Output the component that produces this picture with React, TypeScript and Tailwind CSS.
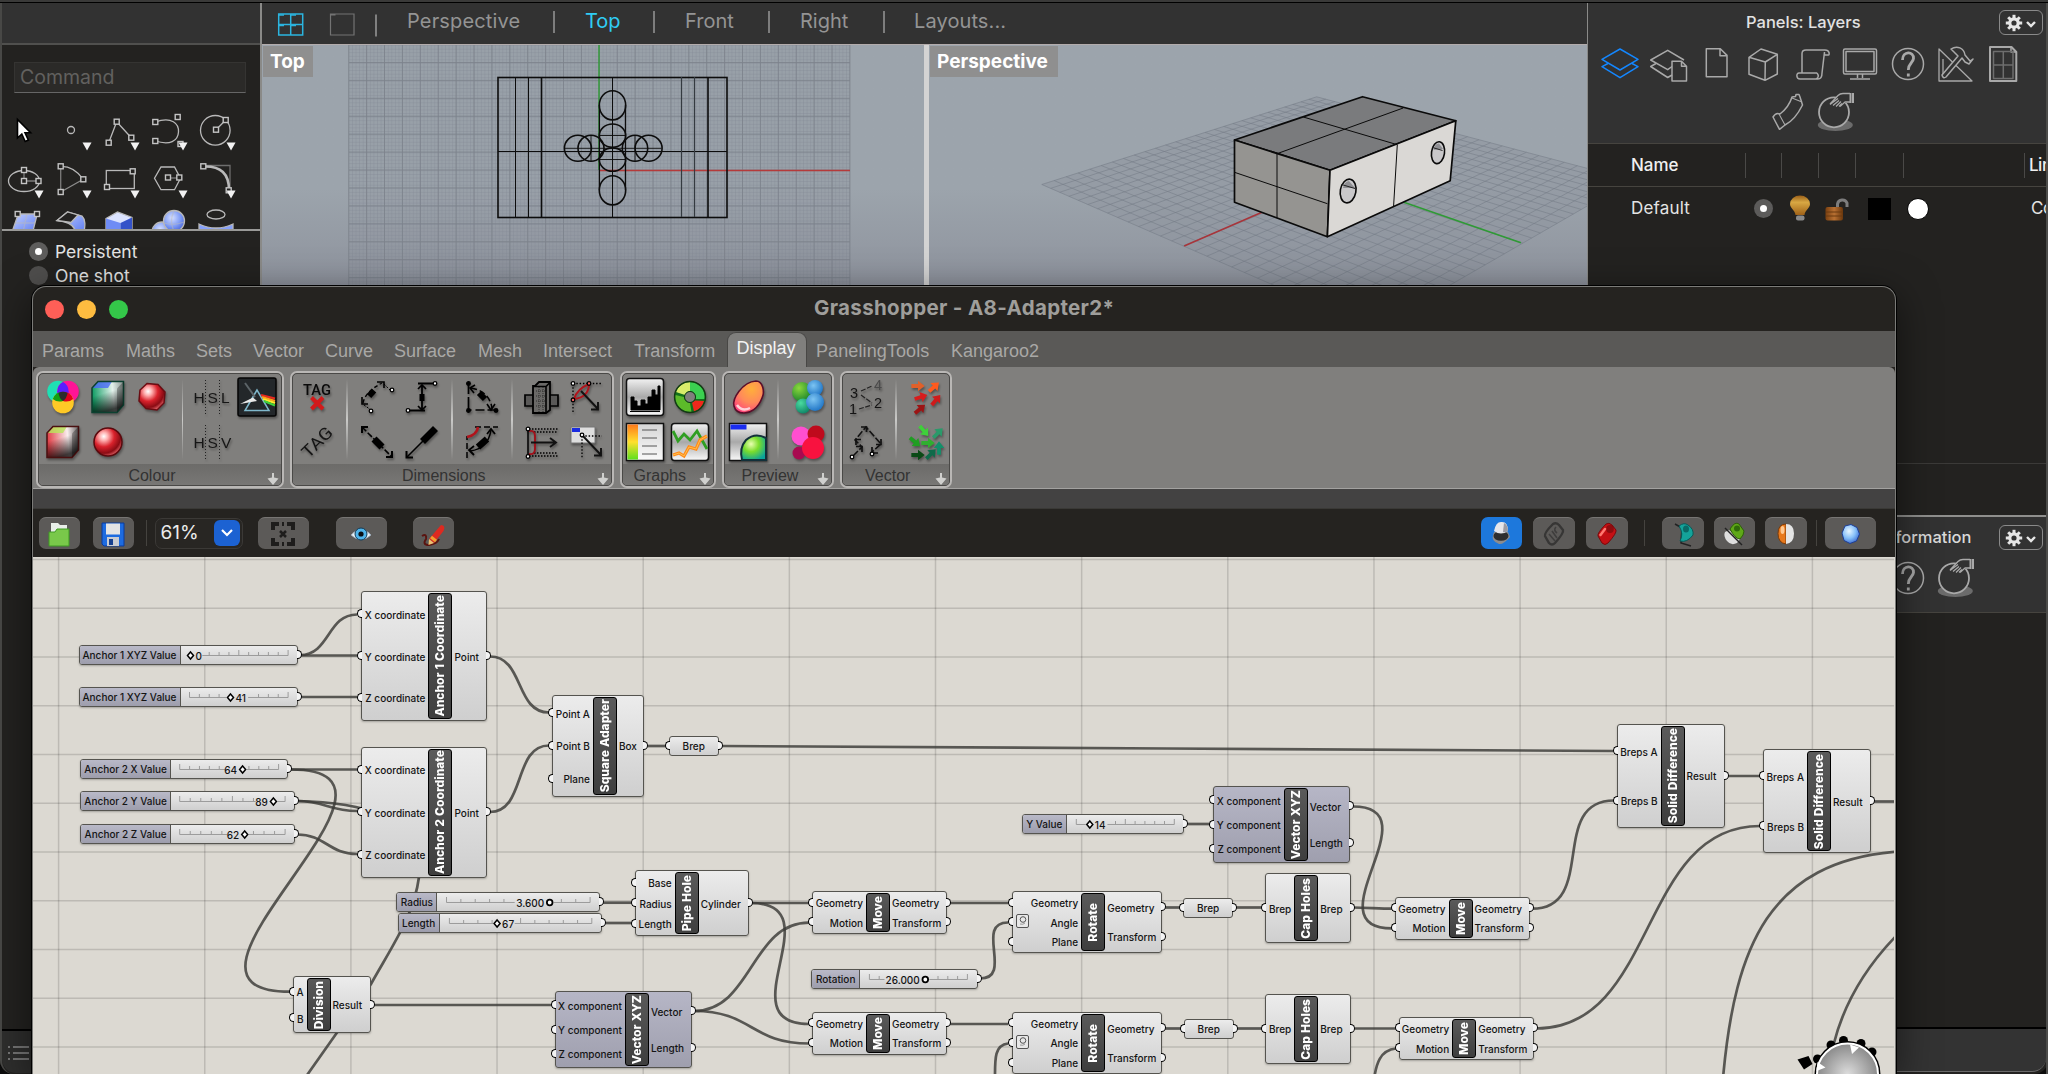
import React from "react";

type Pt = [number, number];

const line = "#a9a9a9";

/* ---------- shared gradients ---------- */
function Defs() {
  return (
    <svg className="absolute h-0 w-0" aria-hidden>
      <defs>
        <radialGradient id="redBall" cx="0.35" cy="0.3" r="0.75">
          <stop offset="0" stopColor="#ffffff" />
          <stop offset="0.2" stopColor="#ffb0b0" />
          <stop offset="0.5" stopColor="#d9222c" />
          <stop offset="0.8" stopColor="#8a0c14" />
          <stop offset="1" stopColor="#e8656a" />
        </radialGradient>
        <linearGradient id="greenCube" x1="0" y1="0.3" x2="1" y2="0.2">
          <stop offset="0" stopColor="#0f9c63" />
          <stop offset="0.65" stopColor="#e4f2ec" />
          <stop offset="1" stopColor="#8b9693" />
        </linearGradient>
        <linearGradient id="redCube" x1="0" y1="0.3" x2="1" y2="0.2">
          <stop offset="0" stopColor="#e03c44" />
          <stop offset="0.65" stopColor="#faeeee" />
          <stop offset="1" stopColor="#6d6a6a" />
        </linearGradient>
        <linearGradient id="cubeShade" x1="0" y1="0" x2="0.3" y2="1">
          <stop offset="0.45" stopColor="#000" stopOpacity="0" />
          <stop offset="1" stopColor="#000" stopOpacity="0.75" />
        </linearGradient>
        <linearGradient id="silver" x1="0" y1="0" x2="0" y2="1">
          <stop offset="0" stopColor="#f2f2f2" />
          <stop offset="0.5" stopColor="#a9a9a9" />
          <stop offset="1" stopColor="#fafafa" />
        </linearGradient>
        <linearGradient id="paper" x1="0" y1="0" x2="0" y2="1">
          <stop offset="0" stopColor="#d5d5d5" />
          <stop offset="1" stopColor="#fafafa" />
        </linearGradient>
        <linearGradient id="hueBar" x1="0" y1="0" x2="0" y2="1">
          <stop offset="0" stopColor="#ff7a1a" />
          <stop offset="0.5" stopColor="#ffe02e" />
          <stop offset="1" stopColor="#5ee01e" />
        </linearGradient>
        <radialGradient id="egg" cx="0.6" cy="0.25" r="0.85">
          <stop offset="0" stopColor="#ffb03a" />
          <stop offset="0.5" stopColor="#ff8a5a" />
          <stop offset="1" stopColor="#ff3a80" />
        </radialGradient>
        <radialGradient id="greenBall" cx="0.4" cy="0.35" r="0.7">
          <stop offset="0" stopColor="#e9ffb0" />
          <stop offset="0.45" stopColor="#7bdd2c" />
          <stop offset="1" stopColor="#0aa39a" />
        </radialGradient>
        <radialGradient id="blueBall" cx="0.4" cy="0.35" r="0.75">
          <stop offset="0" stopColor="#e8f6ff" />
          <stop offset="0.5" stopColor="#86c0fa" />
          <stop offset="1" stopColor="#2a58c8" />
        </radialGradient>
        <radialGradient id="skyBlob" cx="0.4" cy="0.35" r="0.7">
          <stop offset="0" stopColor="#7cc4f2" />
          <stop offset="1" stopColor="#1c72c4" />
        </radialGradient>
        <radialGradient id="leafBlob" cx="0.35" cy="0.3" r="0.8">
          <stop offset="0" stopColor="#8bd83c" />
          <stop offset="1" stopColor="#0d7a2a" />
        </radialGradient>
        <radialGradient id="tealBlob" cx="0.35" cy="0.3" r="0.8">
          <stop offset="0" stopColor="#4adba0" />
          <stop offset="1" stopColor="#0a7d62" />
        </radialGradient>
        <linearGradient id="solidBlue" x1="0" y1="0" x2="1" y2="1">
          <stop offset="0" stopColor="#c2d0ff" />
          <stop offset="1" stopColor="#5f7df0" />
        </linearGradient>
        <radialGradient id="solidSphere" cx="0.4" cy="0.35" r="0.7">
          <stop offset="0" stopColor="#d5dfff" />
          <stop offset="0.6" stopColor="#7d9af5" />
          <stop offset="1" stopColor="#4a66d8" />
        </radialGradient>
        <linearGradient id="bulb" x1="0" y1="0" x2="0" y2="1">
          <stop offset="0" stopColor="#9a5f18" />
          <stop offset="0.35" stopColor="#d8a843" />
          <stop offset="1" stopColor="#a06218" />
        </linearGradient>
        <linearGradient id="lock" x1="0" y1="0" x2="1" y2="0">
          <stop offset="0" stopColor="#7a4010" />
          <stop offset="0.5" stopColor="#b87032" />
          <stop offset="1" stopColor="#6a370c" />
        </linearGradient>
        <radialGradient id="dial" cx="0.5" cy="0.5" r="0.5">
          <stop offset="0" stopColor="#dcdcdc" />
          <stop offset="1" stopColor="#8a8a8a" />
        </radialGradient>
      </defs>
    </svg>
  );
}

/* ---------- left tool palette ---------- */
const Handle = ({ x, y }: { x: number; y: number }) => (
  <rect x={x - 2.5} y={y - 2.5} width="5" height="5" fill="#232220" stroke="#c4c4c4" strokeWidth="1.4" />
);

function Tool({ children, menu = true }: { children: React.ReactNode; menu?: boolean }) {
  return (
    <svg width="48" height="48" viewBox="0 0 48 48" fill="none" stroke="#b9b9b9" strokeWidth="1.3">
      {children}
      {menu && <path d="M34.5 36.5h9l-4.5 8z" fill="#f2f2f2" stroke="none" />}
    </svg>
  );
}

function ToolPalette() {
  return (
    <div className="grid grid-cols-[repeat(5,48px)] auto-rows-[48px] overflow-hidden h-[123px]">
      <Tool menu={false}>
        <path d="M17.5 13.5v18.5l4.3-4 3.4 7.5 3.2-1.4-3.4-7.3h5.6z" fill="#fff" stroke="#000" strokeWidth="1.6" />
      </Tool>
      <Tool>
        <circle cx="23" cy="24" r="3.5" />
      </Tool>
      <Tool>
        <path d="M12.7 36.7 20.7 15.7 35.3 31.7" />
        <Handle x={12.7} y={36.7} />
        <Handle x={20.7} y={15.7} />
        <Handle x={35.3} y={31.7} />
      </Tool>
      <Tool>
        <path d="M11.3 16C28 10 35 18 34.5 26 34 35 26 39.5 11.3 35" />
        <Handle x={11.3} y={16} />
        <Handle x={33.7} y={11} />
        <Handle x={11.3} y={35} />
        <Handle x={36.5} y={38} />
      </Tool>
      <Tool>
        <circle cx="23.3" cy="24.3" r="14.8" />
        <path d="M24 23.7 33.7 14" />
        <Handle x={24} y={23.7} />
        <Handle x={33.7} y={14} />
      </Tool>
      <Tool>
        <ellipse cx="24" cy="27" rx="15.5" ry="10.5" />
        <path d="M24 16v11h14" strokeOpacity="0.6" />
        <Handle x={24} y={16} />
        <Handle x={24} y={27} />
        <Handle x={38.5} y={27} />
      </Tool>
      <Tool>
        <path d="M12.7 38V12.3" strokeOpacity="0.6" />
        <path d="M12.7 12.3Q26 12 35.3 25.3" />
        <path d="M12.7 38 35.3 25.3" strokeOpacity="0.7" />
        <Handle x={12.7} y={12.3} />
        <Handle x={35.3} y={25.3} />
        <Handle x={12.7} y={38} />
      </Tool>
      <Tool>
        <rect x="10.3" y="16.5" width="28" height="18" />
        <Handle x={36.7} y={17.3} />
        <Handle x={11} y={33} />
      </Tool>
      <Tool>
        <path d="M17 13h13.5l6 11.3-6 11.4H17l-6.5-11.4z" />
        <path d="M24 24h11" strokeOpacity="0.6" />
        <Handle x={24} y={23.5} />
        <Handle x={35.3} y={23.5} />
      </Tool>
      <Tool>
        <path d="M12 11.5h26V36" strokeOpacity="0.5" />
        <path d="M12 12.5C29 12 37 20 37 36" strokeWidth="2.6" />
        <Handle x={11.3} y={12.3} />
        <Handle x={36.7} y={36.3} />
      </Tool>
      <Tool menu={false}>
        <path d="M18.3 12H37.3L32.7 30H12z" fill="url(#solidBlue)" />
        <path d="M16 21h19M27 12l-4 18" strokeOpacity="0.5" />
        <Handle x={17.7} y={12} />
        <Handle x={37} y={12} />
      </Tool>
      <Tool menu={false}>
        <path d="M19.5 10 34 14C38 18 37 24 36 30H27C27 24 22 20 9 18.5z" fill="url(#solidBlue)" />
        <path d="M19.5 10 30 13 23 20.5 9 18.5z" fill="#232220" />
      </Tool>
      <Tool menu={false}>
        <path d="M10 16.5 21.5 10 36 15.5V34H10z" fill="#dbe3ff" />
        <path d="M10 16.5 24.5 21V34H10z" fill="#6f8cf5" stroke="none" />
        <path d="M24.5 21 36 15.5V34H24.5z" fill="#3452c8" stroke="none" />
      </Tool>
      <Tool menu={false}>
        <circle cx="18" cy="30" r="10" fill="url(#solidSphere)" />
        <circle cx="30" cy="19" r="10.5" fill="url(#solidSphere)" />
        <path d="M20 21q10 3 20-1M30 9q-5 10 0 20" strokeOpacity="0.5" />
      </Tool>
      <Tool menu={false}>
        <ellipse cx="24" cy="12.5" rx="9" ry="4.5" />
        <path d="M7 22Q24 30 41 22V34H7z" fill="#86a0fa" />
      </Tool>
    </div>
  );
}

/* ---------- viewports ---------- */
function TopViewport() {
  return (
    <svg width="662" height="240" viewBox="262 45 662 240" className="block">
      <defs>
        <pattern id="minor" x="599" y="170.4" width="3.58" height="3.58" patternUnits="userSpaceOnUse">
          <path d="M0 0H3.58M0 0V3.58" stroke="#7f8791" strokeWidth="0.8" strokeOpacity="0.75" />
        </pattern>
      </defs>
      <rect x="349" y="45" width="501" height="240" fill="#8c939c" fillOpacity="0.2" />
      <rect x="349" y="45" width="501" height="240" fill="url(#minor)" />
      <g stroke="#7c838c" strokeWidth="1" strokeOpacity="0.85">
        {Array.from({ length: 29 }, (_, i) => {
          const x = 348.7 + i * 17.9;
          return <path key={i} d={`M${x} 45V285`} />;
        })}
        {Array.from({ length: 13 }, (_, i) => (
          <path key={i} d={`M349 ${62.5 + i * 17.92}H850`} />
        ))}
      </g>
      <path d="M599 45V170" stroke="#2f9a35" strokeWidth="1.4" />
      <path d="M599 170.5H850" stroke="#b53a3a" strokeWidth="1.4" />
      <g fill="none" stroke="#0c0c0c">
        <rect x="498" y="77.5" width="229" height="140" strokeWidth="1.6" />
        <path d="M515.5 77V217M528.5 77V217M612.5 77V217M498 151.5H727" />
        <path d="M681.5 77V217M694.5 77V217" stroke="#343a40" strokeWidth="1.2" />
        <path d="M541.5 77V217M708 77V217" strokeWidth="1.6" />
        <path d="M599.4 105V190M625.5 105V190" strokeWidth="1.3" />
        <g strokeWidth="1.6">
          <ellipse cx="612.5" cy="105.3" rx="13.2" ry="14.6" />
          <ellipse cx="612.5" cy="135.6" rx="13.2" ry="11.6" />
          <ellipse cx="612.5" cy="159.6" rx="13.2" ry="11.7" />
          <ellipse cx="612.5" cy="190.3" rx="13.2" ry="14.6" />
          <ellipse cx="577.9" cy="148.3" rx="13.5" ry="13" />
          <ellipse cx="591" cy="148.3" rx="13" ry="13" />
          <ellipse cx="635" cy="148.3" rx="12.7" ry="13" />
          <ellipse cx="648.6" cy="148.3" rx="13.5" ry="13" />
        </g>
        <path d="M564.5 148.3H661.5M600 135.5H625M600 159.5H625M591 135V161M635 135V161" strokeWidth="0.9" />
      </g>
    </svg>
  );
}

/* maps the unit square onto a four-sided ground plane */
function projector(p0: Pt, p1: Pt, p2: Pt, p3: Pt) {
  const dx1 = p1[0] - p2[0], dx2 = p3[0] - p2[0], dx3 = p0[0] - p1[0] + p2[0] - p3[0];
  const dy1 = p1[1] - p2[1], dy2 = p3[1] - p2[1], dy3 = p0[1] - p1[1] + p2[1] - p3[1];
  const det = dx1 * dy2 - dx2 * dy1;
  const g = (dx3 * dy2 - dx2 * dy3) / det;
  const h = (dx1 * dy3 - dx3 * dy1) / det;
  const a = p1[0] - p0[0] + g * p1[0], b = p3[0] - p0[0] + h * p3[0];
  const d = p1[1] - p0[1] + g * p1[1], e = p3[1] - p0[1] + h * p3[1];
  return (u: number, v: number): Pt => {
    const w = g * u + h * v + 1;
    return [(a * u + b * v + p0[0]) / w, (d * u + e * v + p0[1]) / w];
  };
}

function PerspectiveViewport() {
  const P = projector([1041.8, 184.5], [1316.7, 96.8], [1632, 180.2], [1374.2, 328.8]);
  const seg = (a: Pt, b: Pt) => `M${a[0]} ${a[1]}L${b[0]} ${b[1]}`;
  const n = 28;
  const grid: string[] = [];
  for (let i = 0; i <= n; i++) {
    grid.push(seg(P(i / n, 0), P(i / n, 1)));
    grid.push(seg(P(0, i / n), P(1, i / n)));
  }
  return (
    <svg width="658" height="240" viewBox="929 45 658 240" className="block">
      <path d="M1041.8 184.5 1316.7 96.8 1632 180.2 1374.2 328.8z" fill="#8d949d" fillOpacity="0.5" />
      <path d={grid.join("")} stroke="#757c86" strokeWidth="0.8" strokeOpacity="0.7" />
      <path d="M1184.2 246 1290 200" stroke="#a8343a" strokeWidth="1.5" />
      <path d="M1520.9 242.7 1380 194" stroke="#2f9a35" strokeWidth="1.5" />
      <g stroke="#0a0a0a" strokeWidth="1.7" strokeLinejoin="round">
        <path d="M1362.5 96.7 1455.8 120.7 1330 170.3 1234.5 140z" fill="#7a7b7d" />
        <path d="M1234.5 140 1330 170.3 1327.4 236.7 1234.5 202.3z" fill="#959491" />
        <path d="M1330 170.3 1455.8 120.7 1450.2 180.7 1327.4 236.7z" fill="#dad8d5" />
      </g>
      <path
        d="M1303.3 117 1397.3 144.7 1393.6 206M1403.2 108 1277 153.7V217.7M1234.5 172.3 1327.4 203.7"
        fill="none"
        stroke="#0a0a0a"
      />
      <g fill="#c9c8ca" stroke="#0a0a0a" strokeWidth="1.6">
        <ellipse cx="1348.1" cy="191" rx="7.8" ry="12" transform="rotate(10 1348 191)" />
        <ellipse cx="1438" cy="152.7" rx="6.5" ry="11" transform="rotate(8 1438 152.7)" />
      </g>
      <path d="M1343 188Q1344 182 1349 181L1355 188zM1433.5 150Q1435 143 1439 143.5L1443 149z" fill="#8f8f93" />
      <path d="M1341.5 184.5l13.5 4M1432.5 147.5l10 3" stroke="#222" />
    </svg>
  );
}

const Tag = ({ children, className }: { children: React.ReactNode; className: string }) => (
  <div className={`absolute top-[1px] flex h-[31px] items-center bg-[#8f8f8f] pl-[7px] pt-[2px] text-[19px] font-bold text-white ${className}`}>
    {children}
  </div>
);

function ViewTabs() {
  const bar = <span className="relative top-[1px] h-[22px] w-[2px] shrink-0 bg-[#7d7d7d]" />;
  return (
    <div className="flex h-[41px] items-center bg-[#323232] pb-[6px] text-[20px] text-[#949494]">
      <svg width="116" height="30" viewBox="261 6 116 30" className="relative top-[1px] shrink-0" fill="none">
        <path d="M277.7 13h24v21h-24zM289.7 13v21M277.7 23.5h24" stroke="#2bb5e0" strokeWidth="1.5" />
        <path d="M278 14h5M290 14h5M278 24.5h5M290 24.5h5" stroke="#2bb5e0" strokeWidth="1.5" />
        <path d="M329.5 13h23.5v21h-23.5zM329.5 14h5" stroke="#737373" strokeWidth="1.2" />
        <path d="M375 13.5v22" stroke="#8a8a8a" strokeWidth="1.8" />
      </svg>
      <div className="ml-[29px] w-[146px] shrink-0 tracking-[0.15px]">Perspective</div>
      {bar}
      <div className="ml-[30px] w-[68px] shrink-0 text-[#2fcdf5]">Top</div>
      {bar}
      <div className="ml-[30px] w-[83px] shrink-0">Front</div>
      {bar}
      <div className="ml-[30px] w-[83px] shrink-0">Right</div>
      {bar}
      <div className="ml-[29px] tracking-[0.1px]">Layouts...</div>
    </div>
  );
}

/* ---------- right panel ---------- */
const PanelIcon = ({ children, stroke = line }: { children: React.ReactNode; stroke?: string }) => (
  <svg width="48" height="48" viewBox="0 0 48 48" fill="none" stroke={stroke} strokeWidth="1.5" strokeLinejoin="round">
    {children}
  </svg>
);

const HandBall = () => (
  <PanelIcon>
    <ellipse cx="23.3" cy="37" rx="17.5" ry="6" fill="#6b6b6b" stroke="none" />
    <circle cx="22" cy="24.3" r="15" fill="#323232" strokeWidth="1.8" />
    <path d="M18 16 26 7.5Q28 5.5 31 5.5H38V14L33 15 28 19 19 17z" fill="#323232" stroke="none" />
    <path d="M18 16 26 7.5Q28 5.5 31 5.5H38M38 14 33 14 28 18.5M18 16.5 26 10.5M21 17.5 27 12.5M24 18.5 29 13.5M27 18.5 30 15.5" strokeWidth="1.3" />
    <path d="M38.5 5v10M41 5v10" strokeWidth="2" />
  </PanelIcon>
);

const HelpIcon = () => (
  <PanelIcon>
    <circle cx="24" cy="24" r="15.5" />
    <path d="M18.5 20C18.5 10.5 30 11 29.5 18.5 29 23 24.5 23 24.3 30" strokeWidth="2.8" />
    <path d="M24.3 33.5v3" strokeWidth="2.8" />
  </PanelIcon>
);

function GearButton() {
  return (
    <div className="flex h-[25px] w-[44px] shrink-0 items-center justify-center rounded-[6px] border border-[#8a8a8a]">
      <svg width="36" height="20" viewBox="0 0 36 20" fill="none">
        <circle cx="11" cy="10" r="4.2" stroke="#e6e6e6" strokeWidth="3.2" />
        {Array.from({ length: 8 }, (_, i) => (
          <rect key={i} x="9.5" y="1.8" width="3" height="4" fill="#e6e6e6" transform={`rotate(${i * 45} 11 10)`} />
        ))}
        <path d="M24 9l4 4 4-4" stroke="#e6e6e6" strokeWidth="2.4" />
      </svg>
    </div>
  );
}

function LayersPanel() {
  const sep = "absolute top-[9px] h-[25px] w-px bg-[#4a4947]";
  return (
    <div className="flex w-[458px] flex-col overflow-hidden">
      <div className="h-[141px] shrink-0 border-b border-[#46443f] bg-[#323232]">
        <div className="flex h-[37px] items-start pt-[7px]">
          <div className="ml-[158px] w-[253px] text-[16.5px] font-medium leading-[25px] text-[#e2e2e2]">
            Panels: Layers
          </div>
          <GearButton />
        </div>
        <div className="ml-[8px] flex">
          <PanelIcon stroke="#1487ff">
            <path d="M24 9 42 19.3 24 30 6 19.3z" />
            <path d="M12 23.5 6 26.7 24 37.7 42 26.7 36 23.5" />
          </PanelIcon>
          <PanelIcon>
            <path d="M28 26.5 23.7 29.7 6.7 20 23.7 10.3 40 20" />
            <path d="M12 23.5 6.7 26.5 23.7 37.5 28 35" />
            <path d="M28 21.3h9.5l5 5V41H28zM37.5 21.3v5h5" />
          </PanelIcon>
          <PanelIcon>
            <path d="M14.3 8.7h14l6.7 6.7v21.3H14.3zM28 8.7v7h7" />
          </PanelIcon>
          <PanelIcon>
            <path d="M21 9 37.3 14.3V34L25 40.3 9 34.3V17.3zM9 17.3 25.3 22 37.3 14.3M25.3 22 25 40" />
          </PanelIcon>
          <PanelIcon>
            <path d="M18 10H37C42 10 41.5 15 40.5 15H36.5V13.5M14 33V13.5Q14 10 18 10M36.5 12L34 33Q34 39 30 39H12C8 39 8 33 11 33H29M28 39Q32 37 29 33" />
          </PanelIcon>
          <PanelIcon>
            <rect x="7.5" y="9" width="33" height="25" rx="1.5" />
            <rect x="10" y="11.5" width="28" height="20" />
            <path d="M21.5 34v4M26.5 34v4M14 39h20" />
          </PanelIcon>
          <HelpIcon />
          <PanelIcon>
            <path d="M7 9V41H40zM11 19V37" strokeWidth="1.3" />
            <path d="M10 35 26 16C22 12 20 10 19 9 25 5 32 8 33 15L38 21 41 19 37 24 33 22 30 18 14 37Q11 39 10 35z" fill="#323232" />
          </PanelIcon>
          <PanelIcon>
            <path d="M10 7H31.5L36.3 12V41H10z" strokeWidth="2" />
            <path d="M31 7v5h5" />
            <path d="M13.5 11.5h19.5v27h-19.5zM23.3 11.5v27M13.5 25h19.5" stroke="#6e6e6e" />
          </PanelIcon>
        </div>
        <div className="ml-[176px] flex">
          <PanelIcon>
            <path d="M9 29Q12 24 16 26 25 19 28 9L31.5 8.5 32 6.5H35L36 9 38.5 17Q31 32 21 37L15.5 41.3z" />
            <path d="M28 10 38 14M15 26 21 37" strokeWidth="1.1" />
          </PanelIcon>
          <HandBall />
        </div>
      </div>
      <div className="relative h-[43px] shrink-0 border-b border-[#46443f] pl-[43px] text-[17px] font-medium leading-[43px] text-[#f0f0f0]">
        Name
        <span className={`${sep} left-[157px]`} />
        <span className={`${sep} left-[193px]`} />
        <span className={`${sep} left-[230px]`} />
        <span className={`${sep} left-[267px]`} />
        <span className={`${sep} left-[315px]`} />
        <span className={`${sep} left-[436px]`} />
        <span className="absolute left-[441px] top-0 tracking-[-0.5px]">Lin</span>
      </div>
      <div className="-mt-px flex h-[45px] shrink-0 items-center text-[17px] text-[#e4e4e4]">
        <div className="w-[166px] shrink-0 pl-[43px] tracking-[0.2px]">Default</div>
        <div className="flex h-[19px] w-[19px] shrink-0 items-center justify-center rounded-full bg-[#5c5b5a]">
          <span className="h-[7px] w-[7px] rounded-full bg-white" />
        </div>
        <svg width="100" height="30" viewBox="1773 194 100 30" className="-mr-[8px] shrink-0">
          <path d="M1790 204a10 8.5 0 0 1 20 0C1810 208 1805 210 1804.5 215h-9C1795 210 1790 208 1790 204z" fill="url(#bulb)" />
          <rect x="1796" y="215.5" width="8.5" height="5" rx="2" fill="#8a8a8a" />
          <path d="M1837.5 208v-4a5 5 0 0 1 9.5-1v4" fill="none" stroke="#7d7d7d" strokeWidth="3" />
          <rect x="1825.5" y="207" width="17.5" height="13.5" rx="2" fill="url(#lock)" />
          <path d="M1826 212h16M1826 216h16" stroke="#6b3a10" />
        </svg>
        <div className="ml-[3px] h-[22px] w-[23px] shrink-0 bg-black" />
        <div className="ml-[16px] h-[22px] w-[22px] shrink-0 rounded-full border border-black bg-white" />
        <div className="ml-[102px] w-[15px] shrink-0 whitespace-nowrap tracking-[-0.5px]">Co</div>
      </div>
      <div className="mt-[232px] h-px shrink-0 bg-[#3b3a38]" />
      <div className="mt-[51px] h-[98px] shrink-0 border-b border-t-[2px] border-b-[#46443f] border-t-[#8f8f8d] bg-[#323232]">
        <div className="flex items-start pt-[8px]">
          <div className="w-[411px] pl-[293px] text-[16.5px] font-medium leading-[25px] text-[#dadada]">
            Information
          </div>
          <GearButton />
        </div>
        <div className="ml-[296px] mt-[4px] flex">
          <HelpIcon />
          <HandBall />
        </div>
      </div>
      <div className="h-[414px] shrink-0" />
      <div className="h-[45px] shrink-0 rounded-br-[14px] border-b border-t-2 border-b-[#6a6a6a] border-t-black bg-[#333]" />
    </div>
  );
}

/* ---------- Grasshopper ribbon ---------- */
const Ico = ({ children }: { children: React.ReactNode }) => (
  <div className="flex h-[44.7px] w-[44.7px] items-center justify-center">
    <svg width="40" height="40" viewBox="0 0 40 40" fill="none" className="drop-shadow-[1px_2px_1px_rgba(0,0,0,0.35)]">
      {children}
    </svg>
  </div>
);

const Sep = () => <div className="mx-[7px] my-[4px] w-[1.5px] bg-linear-to-b from-transparent via-[#c9c9c7] to-transparent" />;

const Col = ({ children }: { children: React.ReactNode }) => <div className="flex flex-col">{children}</div>;

function Group({ name, children, pad = "px-[0.5px]" }: { name: string; children: React.ReactNode; pad?: string }) {
  return (
    <div className="h-[117px] rounded-[7px] border-2 border-[#b9b7b5] bg-[#7f7e7c]">
      <div className="flex h-full flex-col overflow-hidden rounded-[5px] border border-[#4a4947] bg-[#807f7d]">
        <div className={`flex h-[91px] pt-[0.5px] ${pad}`}>{children}</div>
        <div className="relative flex flex-1 items-center justify-center bg-linear-to-b from-[#6c6b69] to-[#7a7977] pr-[16px] text-[16px] text-[#333]">
          {name}
          <svg width="12" height="12" viewBox="0 0 12 12" className="absolute bottom-[3px] right-[2px]">
            <path d="M5 0h2v4.5l4.5 1L6 12 .5 5.5l4.500-1z" fill="#d0d0ce" />
          </svg>
        </div>
      </div>
    </div>
  );
}

const Cube = ({ fill, top, edge }: { fill: string; top: string; edge: string }) => (
  <g>
    <path d="M4 11 10 4.5H35.5V28L29 35.5H4z" fill={`url(#${fill})`} />
    <path d="M4 11 10 4.5H24L20 11z" fill={top} fillOpacity="0.8" />
    <path d="M4 11 10 4.5H35.5V28L29 35.5H4z" fill="url(#cubeShade)" stroke={edge} strokeWidth="1.5" />
    <path d="M29 35.5V11.5L35.5 4.5V28z" fill="#000" fillOpacity="0.28" />
  </g>
);

const HText = ({ last }: { last: string }) => (
  <g>
    <path d="M13.5 3v34M27.5 3v34" stroke="#222" strokeDasharray="1 2" />
    <g fill="#161616" fontFamily="Liberation Sans, sans-serif" fontSize="15.5">
      <text x="1.5" y="26">H</text>
      <text x="15.5" y="26">S</text>
      <text x="29" y="26">{last}</text>
    </g>
  </g>
);

const Dot = ({ x, y, f = "#fff" }: { x: number; y: number; f?: string }) => (
  <circle cx={x} cy={y} r="1.8" fill={f} stroke="#000" strokeWidth="1.3" />
);

const SmallArrow = ({ x, y, r, c }: { x: number; y: number; r: number; c: string }) => (
  <path d="M-7-2H0V-5.5L7 0 0 5.5V2H-7z" fill={c} transform={`translate(${x} ${y}) rotate(${r}) scale(0.95)`} />
);

function Ribbon() {
  return (
    <div className="flex h-[122px] items-start gap-[6px] rounded-t-[6px] border-b border-[#a3a2a0] bg-[#807f7d] pl-[3px] pt-[4px]">
      <Group name="Colour" pad="px-[1.5px]">
        <Col>
          <Ico>
            <circle cx="15" cy="14.5" r="10.8" fill="#1fe0b4" />
            <circle cx="25" cy="14.5" r="10.8" fill="#ff1496" />
            <circle cx="20" cy="25.5" r="10.8" fill="#ffc926" />
            <path d="M20 5a10.8 10.8 0 0 1 0 19 10.8 10.8 0 0 1 0-19z" fill="#5a1eff" />
            <path d="M9.8 22a10.8 10.8 0 0 1 10.2-7.3v9.3a10.8 10.8 0 0 1-10.2-2z" fill="#12a012" />
            <path d="M30.2 22a10.8 10.8 0 0 0-10.2-7.3v9.3a10.8 10.8 0 0 0 10.2-2z" fill="#e0001c" />
            <path d="M15.5 16q4.5-2.5 9 0-.5 5-4.5 8-4-3-4.5-8z" fill="#2c2c2c" />
          </Ico>
          <Ico>
            <Cube fill="redCube" top="#b8e85a" edge="#4a1010" />
          </Ico>
        </Col>
        <Col>
          <Ico>
            <Cube fill="greenCube" top="#4a6af8" edge="#0c4030" />
          </Ico>
          <Ico>
            <circle cx="20" cy="20" r="14" fill="url(#redBall)" stroke="#5a0a0e" strokeWidth="1.5" />
          </Ico>
        </Col>
        <Ico>
          <path d="M15 6.5 26 7.5 33 15 32 26 25 33 14 31.5 7 24 8 13z" fill="url(#redBall)" stroke="#6a0c12" strokeWidth="1.5" />
        </Ico>
        <Sep />
        <Col>
          <Ico><HText last="L" /></Ico>
          <Ico><HText last="V" /></Ico>
        </Col>
        <Ico>
          <rect x="1" y="1" width="38" height="38" rx="2" fill="#23272a" stroke="#050505" strokeWidth="1.5" />
          <path d="M20 13 8 33.5H32z" stroke="#7fb8cc" strokeWidth="1.5" />
          <path d="M3 27 16 20.5 20 24z" fill="#e8e8e8" />
          <path d="M8 6l10 14" stroke="#5c6468" strokeWidth="2" />
          <path d="M24 18 38 21.5" stroke="#e8281e" strokeWidth="2.2" />
          <path d="M25 20 38 24" stroke="#ff9d1a" strokeWidth="2" />
          <path d="M26 22 38 26" stroke="#ffe92a" strokeWidth="2" />
          <path d="M27 24 38 28.5" stroke="#3fd13a" strokeWidth="2" />
        </Ico>
      </Group>

      <Group name="Dimensions" pad="px-[1.5px]">
        <Col>
          <Ico>
            <text x="6" y="18" fontSize="15" fill="#0a0a0a" fontFamily="Roboto, sans-serif" fontWeight="500" textLength="28" lengthAdjust="spacingAndGlyphs">TAG</text>
            <path d="M14.5 20.5 26 32M26 20.5 14.5 32" stroke="#d31a1a" strokeWidth="4" />
          </Ico>
          <Ico>
            <text x="2" y="26" fontSize="17" fill="#141414" fontFamily="Roboto, sans-serif" textLength="36" lengthAdjust="spacingAndGlyphs" transform="rotate(-45 20 20)">TAG</text>
          </Ico>
        </Col>
        <Sep />
        <Col>
          <Ico>
            <path d="M6 26Q8 15 25 6" stroke="#000" strokeWidth="1.4" strokeDasharray="4 2.5" />
            <path d="M12 19 17 13.5" stroke="#000" strokeWidth="6" />
            <path d="M5 20v7h6M20 5h7v6" stroke="#000" strokeWidth="1.6" />
            <path d="M7 28l7 5M27 7l6 6" stroke="#000" strokeDasharray="2 1.5" />
            <Dot x={14} y={34} /><Dot x={35} y={13} />
          </Ico>
          <Ico>
            <path d="M5 5 35 35" stroke="#000" strokeWidth="1.5" strokeDasharray="6 2" />
            <path d="M17 17 25 25" stroke="#000" strokeWidth="7" />
            <path d="M5 11V5h6M29 35h6v-6" stroke="#000" strokeWidth="2" />
          </Ico>
        </Col>
        <Col>
          <Ico>
            <path d="M16 6.5H33M6 33.5H23M20 9v8M20 24v8" stroke="#000" strokeWidth="1.8" />
            <path d="M20 17v7" stroke="#000" strokeWidth="5" />
            <path d="M16 12l4-4 4 4M16 29l4 4 4-4" stroke="#000" strokeWidth="1.7" />
            <Dot x={33} y={6.5} /><Dot x={6} y={33.5} />
          </Ico>
          <Ico>
            <path d="M5 35 26 14" stroke="#000" strokeWidth="1.6" />
            <path d="M20.5 19.5 33.5 6.5" stroke="#000" strokeWidth="7" />
            <path d="M4.5 29v6.5h6.5" stroke="#000" strokeWidth="2" />
          </Ico>
        </Col>
        <Sep />
        <Col>
          <Ico>
            <path d="M6.5 8v25H32" stroke="#000" strokeWidth="1.7" strokeDasharray="9 3 16 4" />
            <path d="M9 11Q27 14 30 31" stroke="#000" strokeWidth="1.5" strokeDasharray="6 3" />
            <path d="M17 16 23 22" stroke="#000" strokeWidth="6" />
            <path d="M13 8 8 11l4 5M25 27l4 6 4-6" stroke="#000" strokeWidth="1.6" />
            <Dot x={6.5} y={6.5} f="#000" /><Dot x={6.5} y={33.5} f="#000" /><Dot x={34} y={33.5} f="#000" />
          </Ico>
          <Ico>
            <path d="M5 36V14M13 5H36" stroke="#000" strokeWidth="1.5" strokeDasharray="6 3" />
            <path d="M16 5Q15 13 5 15" stroke="#b0141c" strokeWidth="2.6" />
            <path d="M8 29Q26 27 29 8" stroke="#000" strokeWidth="1.5" />
            <path d="M16 25 25 17" stroke="#000" strokeWidth="6.5" />
            <path d="M25 12l4-5 4 5M12 24l-5 4 5 5" stroke="#000" strokeWidth="1.8" />
          </Ico>
        </Col>
        <Sep />
        <Col>
          <Ico>
            <path d="M3 18H36V29H3z" fill="#5a5958" stroke="#000" strokeWidth="1.7" />
            <path d="M13 9 17 5H28V33L24 36H11V9z" fill="#6a6967" stroke="#000" strokeWidth="1.8" />
            <path d="M11 9.5H24V36M24 9.5 28 5.5" stroke="#000" strokeWidth="1.6" />
            <path d="M14 14h9M14 19h9M14 24h9M14 29h9M17 10v25M21 10v25" stroke="#222" strokeWidth="0.8" strokeDasharray="1 1" />
          </Ico>
          <Ico>
            <path d="M6 7V34" stroke="#000" strokeWidth="1.5" />
            <path d="M7 7H36M12 10H36M7 34H36M12 31H36" stroke="#000" strokeDasharray="1.5 1.5" strokeWidth="1.3" />
            <path d="M7 9Q13 8 13 14V27Q13 33 7 32" stroke="#a0101a" strokeWidth="1.9" />
            <path d="M9 20.5H33M28 16l6 4.5-6 4.5" stroke="#111" strokeWidth="1.9" />
            <Dot x={6} y={7} /><Dot x={6} y={34.5} />
          </Ico>
        </Col>
        <Col>
          <Ico>
            <path d="M6 6.5H35M6 7V36" stroke="#000" strokeDasharray="1.5 1.8" strokeWidth="1.3" />
            <path d="M22 7Q22 20 7 22Q10 12 22 7z" stroke="#b0141c" strokeWidth="1.9" />
            <path d="M14 14 31 32M31 25v7.5h-7" stroke="#111" strokeWidth="1.9" />
            <Dot x={6} y={6.5} /><Dot x={22} y={6.5} f="#f66" /><Dot x={6} y={23} f="#f66" />
          </Ico>
          <Ico>
            <path d="M4 5H28V21H4z" fill="#dedede" stroke="#777" />
            <path d="M5 6h8v4H5z" fill="#1a2ce0" />
            <path d="M15 14H35M15 14V36" stroke="#000" strokeDasharray="1.5 1.8" strokeWidth="1.3" />
            <path d="M15 13 34 33M34 26v7.5h-7" stroke="#111" strokeWidth="1.9" />
            <Dot x={15} y={13} />
          </Ico>
        </Col>
      </Group>

      <Group name="Graphs">
        <Col>
          <Ico>
            <rect x="1.5" y="1.5" width="37" height="37" rx="3" fill="url(#silver)" stroke="#111" strokeWidth="1.5" />
            <path d="M6 33V20h3v4h3v5h4v-6h4v4h3v-7h4V13h3v5h3V9h2V33zM5 34.5h30" fill="#000" stroke="#000" />
          </Ico>
          <Ico>
            <rect x="1.5" y="1.5" width="37" height="37" fill="url(#paper)" stroke="#111" strokeWidth="1.5" />
            <rect x="2.5" y="2.5" width="10.5" height="35" fill="url(#hueBar)" />
            <path d="M17 8h15M17 16h15M17 24h15M17 32h15" stroke="#555" />
          </Ico>
        </Col>
        <Col>
          <Ico>
            <circle cx="20" cy="20" r="15.5" fill="#12701c" />
            <path d="M20 5a15 15 0 0 0-14 10l9 3a6 6 0 0 1 5-4z" fill="#d8ec6a" />
            <path d="M20 5a15 15 0 0 1 14.5 17h-9a6 6 0 0 0-5.5-8z" fill="#3bd050" />
            <path d="M34 24a15 15 0 0 1-10 10.5l-2-9a6 6 0 0 0 3-2z" fill="#f0281c" />
            <path d="M5.5 18a15 15 0 0 0 16 17l-1.5-9a6 6 0 0 1-6-6z" fill="#5cba2a" />
            <circle cx="20" cy="20" r="5.5" fill="#807f7d" stroke="#0c3a10" />
            <circle cx="20" cy="20" r="15.5" stroke="#143a14" strokeWidth="1.3" />
          </Ico>
          <Ico>
            <rect x="1.5" y="1.5" width="37" height="37" rx="3" fill="url(#silver)" stroke="#111" strokeWidth="1.5" />
            <path d="M3 9 8 19 14 12 20 18 27 9 37 27" stroke="#2f9e22" strokeWidth="2.8" />
            <path d="M3 33 9 31 14 34 19 25 26 27 30 18 37 14" stroke="#ff8a1a" strokeWidth="3.2" />
            <path d="M3 33 9 31 14 34 19 25 26 27 30 18 37 14" stroke="#ffc04a" />
          </Ico>
        </Col>
      </Group>

      <Group name="Preview">
        <Col>
          <Ico>
            <path d="M6 29C4 22 14 5 28 4 35 4 37 15 34 21 30 32 22 36 16 36 10 36 7 33 6 29z" fill="url(#egg)" stroke="#5a0f2a" strokeWidth="1.6" />
            <path d="M9 28Q14 35 22 31" stroke="#ffd0d8" strokeWidth="2.5" />
          </Ico>
          <Ico>
            <rect x="1.5" y="1.5" width="37" height="37" fill="url(#silver)" stroke="#111" strokeWidth="1.5" />
            <rect x="2.5" y="2.5" width="16" height="5" fill="#1a2cf0" />
            <path d="M14 38Q11 26 18 18 27 10 38 16V38z" fill="url(#greenBall)" stroke="#12303a" strokeWidth="2" />
          </Ico>
        </Col>
        <Sep />
        <Col>
          <Ico>
            <circle cx="14" cy="15" r="10" fill="url(#leafBlob)" />
            <circle cx="27" cy="11" r="8" fill="url(#skyBlob)" />
            <circle cx="15" cy="29" r="7.5" fill="url(#tealBlob)" />
            <circle cx="27" cy="25" r="9" fill="url(#skyBlob)" />
          </Ico>
          <Ico>
            <circle cx="13" cy="14" r="9.5" fill="#ff4fd0" />
            <circle cx="28" cy="12" r="8.5" fill="#bf0a1c" />
            <circle cx="11" cy="31" r="6.5" fill="#a80a50" />
            <circle cx="25" cy="26" r="11" fill="#f8123f" />
          </Ico>
        </Col>
      </Group>

      <Group name="Vector">
        <Col>
          <Ico>
            <g fontFamily="Liberation Sans, sans-serif" fontSize="14.5" fill="#141414">
              <text x="4" y="21">3</text>
              <text x="28" y="13" fill="#4a4a4a">4</text>
              <text x="3" y="37">1</text>
              <text x="28" y="31">2</text>
            </g>
            <path d="M15 14 26 9M15 18 26 26M13 32 26 28" stroke="#222" strokeWidth="1.2" strokeDasharray="5 1.5" />
          </Ico>
          <Ico>
            <path d="M7 34 16 25 9 18 20 5 35 22 26 30" stroke="#111" strokeWidth="1.6" strokeDasharray="7 2" />
            <path d="M16 30v-5.5h-6M10 23v-5.5h5M15 5h5.5v5M35 17v5.5h-5M26 25v6h6" stroke="#111" strokeWidth="1.7" />
            <Dot x={6} y={35} /><Dot x={26} y={32} />
          </Ico>
        </Col>
        <Sep />
        <Col>
          <Ico>
            <SmallArrow x={12} y={9} r={0} c="#e0602a" />
            <SmallArrow x={28} y={10} r={-42} c="#ff5a1e" />
            <SmallArrow x={15} y={20} r={-18} c="#d81c1c" />
            <SmallArrow x={30} y={23} r={-50} c="#d01a1a" />
            <SmallArrow x={14} y={32} r={-40} c="#9c1414" />
          </Ico>
          <Ico>
            <SmallArrow x={18} y={9} r={50} c="#3fd03a" />
            <SmallArrow x={32} y={11} r={-45} c="#2a9a6a" />
            <SmallArrow x={9} y={20} r={40} c="#1f9e22" />
            <SmallArrow x={22} y={21} r={0} c="#2fae2f" />
            <SmallArrow x={33} y={26} r={-90} c="#12906a" />
            <SmallArrow x={12} y={33} r={0} c="#0a4a16" />
            <SmallArrow x={25} y={32} r={-45} c="#0f6a4a" />
          </Ico>
        </Col>
      </Group>
    </div>
  );
}

/* ---------- Grasshopper tab strip & toolbar ---------- */
function RibbonTabs() {
  return (
    <div className="flex h-[36px] items-start bg-[#5a5957] text-[18px] leading-[40px] text-[#a9a8a6]">
      <span className="ml-[9px] w-[84px]">Params</span>
      <span className="w-[70px]">Maths</span>
      <span className="w-[57px]">Sets</span>
      <span className="w-[72px]">Vector</span>
      <span className="w-[69px]">Curve</span>
      <span className="w-[84px]">Surface</span>
      <span className="w-[65px]">Mesh</span>
      <span className="w-[91px]">Intersect</span>
      <span className="w-[93px]">Transform</span>
      <span className="mt-px h-[35px] w-[80px] rounded-t-[9px] border-x border-t border-[#484745] bg-[#807f7d] pr-[2px] text-center leading-[31px] text-[#f4f4f4]">
        Display
      </span>
      <span className="ml-[9px] w-[135px] tracking-[0.1px]">PanelingTools</span>
      <span>Kangaroo2</span>
    </div>
  );
}

const Btn = ({ className, children }: { className: string; children: React.ReactNode }) => (
  <div className={`flex h-[32px] shrink-0 items-center justify-center rounded-[7px] border-t border-[#777573] bg-[#5c5a58] ${className}`}>
    <svg width="32" height="30" viewBox="0 0 32 30" fill="none">
      {children}
    </svg>
  </div>
);

function Toolbar() {
  return (
    <div className="flex h-[48px] items-center bg-[#252320] pl-[5.5px]">
      <Btn className="w-[41px]">
        <path d="M8 4h7l2 2h7v12H8z" fill="#e9efe9" />
        <path d="M6 13h6l2-3h12v17H6z" fill="#79c84a" stroke="#3f9a22" />
      </Btn>
      <Btn className="ml-[13px] w-[41px]">
        <path d="M5 4H27V27H7L5 25z" fill="#1d6be0" stroke="#0b3a9a" />
        <rect x="9" y="4.5" width="14" height="11" fill="#e4e4e4" />
        <rect x="10" y="18" width="12" height="9" fill="#c9ccd2" />
        <rect x="12" y="20" width="4" height="6" fill="#16408f" />
      </Btn>
      <span className="ml-[12px] h-[26px] w-px bg-[#45433f]" />
      <div className="ml-[8px] flex h-[31px] w-[88px] shrink-0 items-center justify-between rounded-[7px] border border-[#3b3936] bg-[#282623] pl-[5px] pr-[2px] text-[19px] text-[#ececec]">
        61%
        <span className="flex h-[26px] w-[26px] items-center justify-center rounded-[6px] bg-[#1c62d2]">
          <svg width="14" height="10" viewBox="0 0 14 10" fill="none">
            <path d="M2 2l5 5 5-5" stroke="#fff" strokeWidth="2.2" />
          </svg>
        </span>
      </div>
      <Btn className="ml-[15px] w-[51px]">
        <path d="M6 11V5h6M20 5h6v6M26 19v6h-6M12 25H6v-6M15 5h2M15 25h2" stroke="#1e1d1c" strokeWidth="4" />
        <path d="M13 12l6 6M19 12l-6 6" stroke="#1e1d1c" strokeWidth="2.5" />
      </Btn>
      <Btn className="ml-[27px] w-[51px]">
        <path d="M6 16Q16 5 26 16 16 25 6 16z" fill="#eef4f8" stroke="#9ab" strokeWidth="0.8" />
        <circle cx="16" cy="15" r="6" fill="#4fb4ea" stroke="#123a56" />
        <circle cx="16" cy="15" r="2.6" fill="#0a0f14" />
      </Btn>
      <Btn className="ml-[26px] w-[41px]">
        <path d="M5 17Q10 14 9 20 5 26 12 26 20 25 22 20" stroke="#5a1410" strokeWidth="2" />
        <path d="M12 20 24 6Q29 6 26.5 12L17 24z" fill="#dd2a20" />
        <path d="M12 20 17 24 11.5 26z" fill="#f0c070" />
        <path d="M14 18 19 22" stroke="#f0a030" strokeWidth="3" />
      </Btn>
      <div className="flex-1" />
      <div className="flex h-[32px] w-[41.5px] shrink-0 items-center justify-center rounded-[7px] bg-[#1d78dc]">
        <svg width="32" height="30" viewBox="0 0 32 30" fill="none">
          <path d="M8 17Q6 23 14 26 18 27 25 19L23 14H9z" fill="#8c8c8e" />
          <ellipse cx="16" cy="18" rx="7.5" ry="4.8" fill="#2e2e2e" />
          <path d="M9 13Q11 3 17 4 23 4 23 13 16 18 9 13z" fill="#e6e6ea" />
          <path d="M19 5Q23 7 23 13 20 15 18 14z" fill="#9a9aa2" />
        </svg>
      </div>
      <Btn className="ml-[11px] w-[42px]">
        <path d="M7 17Q6 14 15 5 18 3 21 6L25 11Q26 14 17 24 14 27 11 24z" stroke="#373635" strokeWidth="2.4" />
        <path d="M11 15l6 7M14 12l5 7M18 8q-3 3 1 6" stroke="#3f3e3d" strokeWidth="1.6" />
      </Btn>
      <Btn className="ml-[11px] w-[42px]">
        <path d="M7 17Q6 14 15 5 18 3 21 6L25 11Q26 14 17 24 14 27 11 24z" fill="#c41014" stroke="#7a0a0c" />
        <ellipse cx="19" cy="10" rx="3.8" ry="4" fill="#6a0a0c" fillOpacity="0.6" />
        <path d="M9.5 16 14 10" stroke="#ff7a70" strokeWidth="2.5" strokeLinecap="round" />
      </Btn>
      <span className="ml-[16px] h-[26px] w-px bg-[#45433f]" />
      <Btn className="ml-[17px] w-[41.5px]">
        <path d="M8 5 15 9 14 24 24 27" stroke="#222" strokeWidth="1.5" />
        <path d="M12 7Q17 3 21 6 27 10 26 16 20 24 13 22 17 15 12 7z" fill="#14a39a" stroke="#0a5a58" />
        <ellipse cx="19" cy="10" rx="3" ry="3.5" fill="#0a6a66" />
      </Btn>
      <Btn className="ml-[10px] w-[41.5px]">
        <path d="M7 13Q5 17 9 22 13 27 19 24L22 20 11 11z" fill="#dedede" />
        <path d="M12 10Q17 2 21 5L26 12Q26 16 22 20 17 20 12 10z" fill="#5fa818" stroke="#2d6008" />
        <ellipse cx="19" cy="9.5" rx="3" ry="3" fill="#2f6a0a" />
        <path d="M7 9 24 26" stroke="#222" strokeWidth="1.5" />
      </Btn>
      <Btn className="ml-[9.5px] w-[42px]">
        <path d="M16 5Q8 5 8 14.5 8 24 16 25z" fill="#e8791c" stroke="#7a3a0a" />
        <path d="M16 5Q24 5 24 14.5 24 24 16 25z" fill="#e4e4e4" />
        <ellipse cx="12.5" cy="11" rx="2" ry="4" fill="#ffc890" />
      </Btn>
      <span className="ml-[9px] h-[26px] w-px bg-[#45433f]" />
      <Btn className="ml-[8px] mr-[19.5px] w-[51px]">
        <path d="M11 7 17 5.5 23 8.5 25.5 15 22.5 22 16 24.5 10 21.5 8 14z" fill="url(#blueBall)" stroke="#1f3f96" />
      </Btn>
    </div>
  );
}

/* ---------- node canvas ---------- */
const OX = 33;
const OY = 556.9;

interface NodeProps {
  x: number; y: number; w: number; h: number;
  tx: number; tw?: number;
  title: string; ins: string[]; outs: string[];
  violet?: boolean; radians?: boolean;
}

const InPort = () => <span className="absolute -left-[5px] top-1/2 h-[9px] w-[5px] -translate-y-[5px] rounded-l-full border-[1.5px] border-r-0 border-black bg-[#f4f4f4]" />;
const OutPort = () => <span className="absolute -right-[5px] top-1/2 h-[9px] w-[5px] -translate-y-[5px] rounded-r-full border-[1.5px] border-l-0 border-black bg-[#f4f4f4]" />;

function Node({ x, y, w, h, tx, tw = 24, title, ins, outs, violet, radians }: NodeProps) {
  return (
    <div
      className={`absolute flex rounded-[3px] border border-[#55544f] py-px text-[10px] font-medium text-[#141414] shadow-[0_1px_2px_rgba(0,0,0,0.25)] bg-linear-to-b ${
        violet ? "from-[#b6b6c6] to-[#9f9fae]" : "from-[#ececec] to-[#cfcfcf]"
      }`}
      style={{ left: x - OX, top: y - OY, width: w, height: h }}
    >
      <div className="flex flex-col" style={{ width: tx - x - 1 }}>
        {ins.map((t, i) => (
          <div key={i} className="relative flex flex-1 items-center justify-end whitespace-nowrap pr-[3px] pt-px leading-none">
            <InPort />
            {radians && i === 1 && (
              <svg width="13" height="14" viewBox="0 0 13 14" className="absolute left-[3px] top-[2px]" fill="none">
                <rect x="0.5" y="0.5" width="12" height="13" rx="1.5" fill="#e8e8e8" stroke="#555" />
                <circle cx="7" cy="5.5" r="2.8" stroke="#555" />
                <path d="M4 10q3 1 5-1" stroke="#999" />
              </svg>
            )}
            {t}
          </div>
        ))}
      </div>
      <div
        className="flex shrink-0 items-center justify-center rounded-[3px] border border-black bg-linear-to-b from-[#5a5a5a] to-[#3e3e3e]"
        style={{ width: tw }}
      >
        <span className="rotate-180 whitespace-nowrap text-[12px] font-extrabold leading-none text-white [word-spacing:0.5px] [writing-mode:vertical-rl]">{title}</span>
      </div>
      <div className="flex flex-1 flex-col">
        {outs.map((t, i) => (
          <div key={i} className="relative flex flex-1 items-center whitespace-nowrap pl-[2px] pt-px leading-none">
            {t}
            <OutPort />
          </div>
        ))}
      </div>
    </div>
  );
}

function Param({ x, y, w }: { x: number; y: number; w: number }) {
  return (
    <div
      className="absolute flex h-[20px] items-center justify-center rounded-[3px] border border-[#55544f] bg-linear-to-b from-[#ececec] to-[#cfcfcf] pt-px text-[10px] font-medium text-[#141414]"
      style={{ left: x - OX, top: y - OY, width: w }}
    >
      <InPort />
      Brep
      <OutPort />
    </div>
  );
}

interface SliderProps {
  x: number; y: number; w: number; nw: number;
  name: string; value: string; r0: number; r1: number; k: number;
  left?: boolean; round?: boolean;
}

function Slider({ x, y, w, nw, name, value, r0, r1, k, left, round }: SliderProps) {
  const base = x + nw;
  const W = w - nw;
  const a = r0 - base;
  const b = r1 - base;
  const kx = k - base;
  const clear = value.length * 5.8 + 6;
  const inGap = (tx: number) => (left ? tx > kx - clear - 2 && tx < kx + 4 : tx > kx - 4 && tx < kx + clear + 2);
  const ticks = Array.from({ length: 11 }, (_, i) => a + ((b - a) * i) / 10);
  const g0 = left ? kx - clear : kx - 4;
  const g1 = left ? kx + 4 : kx + clear;
  return (
    <div
      className="absolute flex h-[20px] overflow-visible rounded-[3px] border border-[#55544f] bg-linear-to-b from-[#ececec] to-[#cfcfcf] text-[10px] font-medium text-[#141414] shadow-[0_1px_2px_rgba(0,0,0,0.25)]"
      style={{ left: x - OX, top: y - OY, width: w }}
    >
      <div
        className="flex shrink-0 items-center justify-center whitespace-nowrap rounded-l-[2px] border-r border-[#55544f] bg-linear-to-b from-[#b9b9c8] to-[#9d9dac] pt-px"
        style={{ width: nw - 1 }}
      >
        {name}
      </div>
      <svg width={W - 1} height="18" className="shrink-0" fill="none">
        <g stroke="#9c9c9c" strokeWidth="1">
          {g0 > a && <path d={`M${a} 9.5H${g0}`} />}
          {g1 < b && <path d={`M${Math.max(a, g1)} 9.5H${b}`} />}
          {ticks.map((t, i) => (inGap(t) ? null : <path key={i} d={`M${t} ${i % 5 === 0 ? 4 : 6}V9.5`} />))}
        </g>
        {round ? (
          <circle cx={kx} cy="9.5" r="2.8" fill="#fff" stroke="#000" strokeWidth="1.8" />
        ) : (
          <path d={`M${kx} 6l3 3.5-3 3.5-3-3.5z`} fill="#fff" stroke="#000" strokeWidth="1.5" />
        )}
        <text
          x={left ? kx - 5.5 : kx + 5}
          y="13.5"
          textAnchor={left ? "end" : "start"}
          fontSize="10"
          fontWeight="500"
          fill="#141414"
        >
          {value}
        </text>
      </svg>
      <OutPort />
    </div>
  );
}

/* start, end, and horizontal reach of each handle */
const wires: [Pt, Pt, number][] = [
  [[300, 655], [357, 614.5], 30],
  [[300, 655.5], [357, 655.5], 20],
  [[300, 697], [357, 697], 20],
  [[290, 769.5], [357, 769.5], 20],
  [[297, 801], [357, 811], 28],
  [[297, 834.5], [357, 854], 28],
  [[291, 769.5], [290, 991.7], 155],
  [[490, 656.5], [549, 712.5], 34],
  [[490, 812], [549, 745.5], 36],
  [[647, 746], [666, 746], 6],
  [[721, 746], [1613, 751], 400],
  [[603, 902.7], [632, 902.7], 8],
  [[604, 923], [632, 923], 8],
  [[373, 1005], [552, 1005], 60],
  [[751, 903], [809, 903], 20],
  [[751, 903], [809, 1024], 84],
  [[694, 1011], [809, 922.7], 58],
  [[694, 1011], [809, 1043.5], 58],
  [[950, 903], [1008, 903], 20],
  [[950, 1024], [1008, 1024], 20],
  [[980, 978.5], [1008, 922.5], 34],
  [[1165, 907.5], [1181, 907.5], 6],
  [[1235, 907.5], [1262, 907.5], 8],
  [[1165, 1028.5], [1181, 1028.5], 6],
  [[1236, 1028.5], [1262, 1028.5], 8],
  [[1353, 907.5], [1392, 908.7], 12],
  [[1353, 1028.5], [1396, 1028.5], 12],
  [[1186, 824], [1210, 824], 8],
  [[1353, 806.5], [1392, 928.3], 82],
  [[1532, 908.7], [1614, 800.5], 66],
  [[1536, 1028.5], [1760, 826], 122],
  [[1727, 776], [1760, 776], 10],
  [[1873, 801.5], [1900, 801.5], 8],
];

const loose = [
  "M297 801C350 802 430 812 419 877C414 915 394 943 371 984Q355 1008 336.7 1033L305 1078",
  "M1008 1043.5C994 1045 995 1060 995 1080",
  "M1396 1048.5C1380 1050 1376 1064 1374 1080",
  "M1896 851.7C1770 862 1735 945 1723 1078",
  "M1896 936C1868 965 1845 1000 1834 1043",
];

function Canvas() {
  return (
    <div className="relative h-[517px] overflow-hidden bg-[#dcd9d2] font-[Inter]">
      <svg width="1861" height="517" viewBox="33 557 1861 517" fill="none" className="absolute left-0 top-0">
        <g stroke="#000" strokeOpacity="0.14" strokeWidth="1.5">
          {Array.from({ length: 13 }, (_, i) => (
            <path key={i} d={`M${58.6 + i * 146.15} 557V1074`} />
          ))}
          {Array.from({ length: 11 }, (_, i) => (
            <path key={i} d={`M33 ${559.4 + i * 48.75}H1894`} />
          ))}
        </g>
        <g stroke="#3a3a37" strokeOpacity="0.82" strokeWidth="2.7">
          {wires.map(([a, b, c], i) => (
            <path key={i} d={`M${a[0]} ${a[1]}C${a[0] + c} ${a[1]} ${b[0] - c} ${b[1]} ${b[0]} ${b[1]}`} />
          ))}
          {loose.map((d, i) => (
            <path key={i} d={d} />
          ))}
        </g>
        <g fill="#000">
          <circle cx="1847.5" cy="1074" r="33" />
          <circle cx="1843.5" cy="1040.5" r="4.5" />
          <circle cx="1861" cy="1043.5" r="4.5" />
          <circle cx="1872" cy="1052" r="4.5" />
          <circle cx="1831" cy="1045" r="4.5" />
          <circle cx="1817.5" cy="1059" r="4.5" />
          <path d="M1797.5 1059.5 1808.5 1056 1812.5 1064 1804 1069.5z" />
        </g>
        <circle cx="1847.5" cy="1074" r="30.5" fill="url(#dial)" stroke="#fff" strokeWidth="2" />
        <path d="M1850 1044.5 1859 1047.5 1852 1054zM1817.5 1062 1825.5 1067.5 1816.5 1071z" fill="#fff" />
      </svg>

      <Slider x={78.5} y={645} w={219} nw={102} name="Anchor 1 XYZ Value" value="0" r0={189} r1={287.6} k={190} />
      <Slider x={78.5} y={687} w={219} nw={102} name="Anchor 1 XYZ Value" value="41" r0={189} r1={287.6} k={230} />
      <Slider x={80.3} y={759.3} w={207.5} nw={90.6} name="Anchor 2 X Value" value="64" r0={179.6} r1={278.5} k={242.5} left />
      <Slider x={80.3} y={791.3} w={214.3} nw={90.6} name="Anchor 2 Y Value" value="89" r0={179.6} r1={285} k={273.3} left />
      <Slider x={80.3} y={824.3} w={214.3} nw={90.6} name="Anchor 2 Z Value" value="62" r0={179.6} r1={285} k={244.6} left />
      <Slider x={396.3} y={892.3} w={204.2} nw={41.2} name="Radius" value="3.600" r0={447} r1={590.6} k={550.2} left round />
      <Slider x={397.6} y={912.9} w={204} nw={42} name="Length" value="67" r0={449} r1={591.4} k={496.7} />
      <Slider x={811} y={968.6} w={166.6} nw={49.4} name="Rotation" value="26.000" r0={869.8} r1={967.8} k={925.7} left round />
      <Slider x={1021.6} y={813.8} w={162.2} nw={45.4} name="Y Value" value="14" r0={1076.3} r1={1174.3} k={1089.8} />

      <Node x={361.3} y={591.3} w={125.4} h={129.5} tx={428.5} title="Anchor 1 Coordinate" ins={["X coordinate", "Y coordinate", "Z coordinate"]} outs={["Point"]} />
      <Node x={361.3} y={746.6} w={125.4} h={131} tx={428.5} title="Anchor 2 Coordinate" ins={["X coordinate", "Y coordinate", "Z coordinate"]} outs={["Point"]} />
      <Node x={552.4} y={695} w={92} h={101.8} tx={592.9} title="Square Adapter" ins={["Point A", "Point B", "Plane"]} outs={["Box"]} />
      <Param x={669} y={736} w={49.5} />
      <Node x={635} y={870.3} w={113.6} h={65.5} tx={674.7} title="Pipe Hole" ins={["Base", "Radius", "Length"]} outs={["Cylinder"]} />
      <Node x={293} y={976.3} w={77.6} h={57} tx={306.5} title="Division" ins={["A", "B"]} outs={["Result"]} />
      <Node x={555} y={991.3} w={136.8} h={76.4} tx={624.9} title="Vector XYZ" ins={["X component", "Y component", "Z component"]} outs={["Vector", "Length"]} violet />
      <Node x={812.2} y={890.7} w={135.2} h={43.2} tx={866} title="Move" ins={["Geometry", "Motion"]} outs={["Geometry", "Transform"]} />
      <Node x={812.2} y={1011.4} w={135.2} h={43.2} tx={866} title="Move" ins={["Geometry", "Motion"]} outs={["Geometry", "Transform"]} />
      <Node x={1011.8} y={890.7} w={150.7} h={62.7} tx={1081.2} title="Rotate" ins={["Geometry", "Angle", "Plane"]} outs={["Geometry", "Transform"]} radians />
      <Node x={1011.8} y={1011.5} w={150.7} h={62.7} tx={1081.2} title="Rotate" ins={["Geometry", "Angle", "Plane"]} outs={["Geometry", "Transform"]} radians />
      <Param x={1183.3} y={897.4} w={49.5} />
      <Param x={1184} y={1018.4} w={49.5} />
      <Node x={1265.3} y={873.3} w={85.4} h={69.4} tx={1294.3} title="Cap Holes" ins={["Brep"]} outs={["Brep"]} />
      <Node x={1265.3} y={994.2} w={85.4} h={69.4} tx={1294.3} title="Cap Holes" ins={["Brep"]} outs={["Brep"]} />
      <Node x={1213.4} y={786.3} w={137.1} h={76.4} tx={1283.7} title="Vector XYZ" ins={["X component", "Y component", "Z component"]} outs={["Vector", "Length"]} violet />
      <Node x={1395} y={896.4} w={134.6} h={43.2} tx={1448.6} title="Move" ins={["Geometry", "Motion"]} outs={["Geometry", "Transform"]} />
      <Node x={1398.8} y={1016.6} w={135.2} h={43.2} tx={1452.2} title="Move" ins={["Geometry", "Motion"]} outs={["Geometry", "Transform"]} />
      <Node x={1617.1} y={724} w={107.6} h={103.8} tx={1660.6} title="Solid Difference" ins={["Breps A", "Breps B"]} outs={["Result"]} />
      <Node x={1763.2} y={749.3} w={107.6} h={104} tx={1807} title="Solid Difference" ins={["Breps A", "Breps B"]} outs={["Result"]} />
    </div>
  );
}

function GrasshopperWindow() {
  return (
    <div className="absolute left-[32px] top-[286px] w-[1864px] overflow-hidden rounded-t-[14px] border-x border-t border-[#7b7b78] bg-[#252320] shadow-[0_0_0_1px_#000,0_10px_40px_rgba(0,0,0,0.55)]">
      <div className="flex h-[44px] items-center gap-[13px] pl-[12px]">
        <span className="h-[19px] w-[19px] rounded-full bg-[#ff5f57]" />
        <span className="h-[19px] w-[19px] rounded-full bg-[#febc40]" />
        <span className="h-[19px] w-[19px] rounded-full bg-[#34c749]" />
        <span className="ml-[673px] whitespace-nowrap pb-[2px] font-[Inter] text-[20.5px] font-bold tracking-[0.33px] text-[#9f9e9b]">Grasshopper - A8-Adapter2*</span>
      </div>
      <div className="font-['Liberation_Sans']">
        <RibbonTabs />
        <Ribbon />
      </div>
      <div className="h-[20px] border-b border-[#3a3936] bg-[#434242]" />
      <Toolbar />
      <Canvas />
    </div>
  );
}

export default function App() {
  return (
    <div className="relative h-[1074px] w-[2048px] overflow-hidden bg-[#0c0c0c] font-[Inter,sans-serif]">
      <Defs />
      <div className="flex h-[1074px] flex-col">
        <div className="h-[3px] shrink-0 border-b border-black bg-[#3a3a39]" />
        <div className="flex h-[1071px] rounded-b-[14px] bg-[#232220]">
          <div className="flex w-[260px] shrink-0 flex-col rounded-bl-[14px] border-l-2 border-[#484846]">
            <div className="h-[42px] shrink-0 border-b-2 border-[#50504e] bg-[#323232]" />
            <div className="ml-[12px] mt-[17px] flex h-[31px] w-[232px] shrink-0 items-center border border-b-[#666] border-[#353432] bg-[#2b2a28] pl-[5px] pt-px text-[19.5px] text-[#62615f]">
              Command
            </div>
            <div className="-ml-[2px] mt-[13px] shrink-0">
              <ToolPalette />
            </div>
            <div className="h-[2px] shrink-0 bg-[#9a9a98]" />
            <div className="flex flex-col gap-[5px] pl-[27px] pt-[11px] text-[17.5px] leading-[19px] text-[#e4e4e4]">
              <div className="flex items-center gap-[7px]">
                <span className="flex h-[19px] w-[19px] items-center justify-center rounded-full bg-[#5e5d5c]">
                  <span className="h-[7px] w-[7px] rounded-full bg-white" />
                </span>
                Persistent
              </div>
              <div className="flex items-center gap-[7px]">
                <span className="h-[19px] w-[19px] rounded-full bg-[#4f4e4d]" />
                One shot
              </div>
            </div>
            <div className="mb-px mt-auto h-[44px] shrink-0 rounded-bl-[14px] border-t-2 border-black bg-[#2e2e2d] pl-[5px] pt-[14px]">
              <svg width="24" height="16" viewBox="0 0 24 16" stroke="#8f8f8f" strokeWidth="1.3">
                <path d="M1 2h2M6 2h16M1 8h2M6 8h16M1 14h2M6 14h16" />
              </svg>
            </div>
          </div>
          <div className="w-[2px] shrink-0 bg-[#8a8a88]" />
          <div className="flex w-[1325px] shrink-0 flex-col">
            <ViewTabs />
            <div className="h-px bg-[#b3acac]" />
            <div className="flex h-[240px] bg-linear-to-b from-[#9ca4ac] from-60% to-[#8e939d]">
              <div className="relative w-[662px]">
                <TopViewport />
                <Tag className="left-[1px] w-[50px]">Top</Tag>
              </div>
              <div className="w-[5px] bg-[#d3d3d3]" />
              <div className="relative w-[658px]">
                <PerspectiveViewport />
                <Tag className="left-[1px] w-[128px]">Perspective</Tag>
              </div>
            </div>
          </div>
          <div className="w-px shrink-0 bg-[#8a8a88]" />
          <LayersPanel />
          <div className="w-[2px] shrink-0 bg-[#4c4c4a]" />
        </div>
      </div>
      <GrasshopperWindow />
    </div>
  );
}
